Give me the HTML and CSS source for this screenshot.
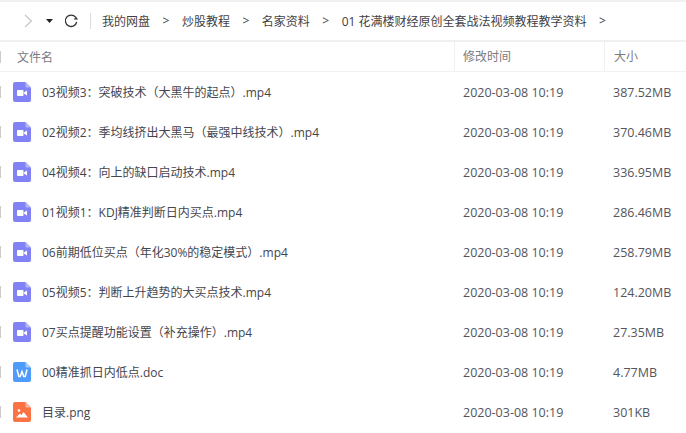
FILE: index.html
```html
<!DOCTYPE html>
<html lang="zh">
<head>
<meta charset="utf-8">
<title>我的网盘</title>
<link rel="stylesheet" href="styles.css">
</head>
<body>
<svg class="defs" width="0" height="0">
  <symbol id="video" viewBox="0 0 18 20">
    <path d="M2 0h10.500L18 5.500V18a2 2 0 0 1-2 2H2a2 2 0 0 1-2-2V2a2 2 0 0 1 2-2z" fill="#8082f5"/>
    <path d="M12.500 0L18 5.500h-4a1.500 1.500 0 0 1-1.500-1.500z" fill="#b5b6fa"/>
    <rect x="4" y="8" width="6.500" height="6" rx="1" fill="#fff"/>
    <path d="M11 10.500l3-2v5l-3-2z" fill="#fff"/>
  </symbol>
  <symbol id="word" viewBox="0 0 18 20">
    <path d="M2 0h10.500L18 5.500V18a2 2 0 0 1-2 2H2a2 2 0 0 1-2-2V2a2 2 0 0 1 2-2z" fill="#4f9bfb"/>
    <path d="M12.500 0L18 5.500h-4a1.500 1.500 0 0 1-1.500-1.500z" fill="#a3ccfd"/>
    <path d="M4 7.500l1.800 7h1.400L9 9.500l1.800 5h1.400l1.800-7" fill="none" stroke="#fff" stroke-width="1.500"/>
  </symbol>
  <symbol id="image" viewBox="0 0 18 20">
    <path d="M2 0h10.500L18 5.500V18a2 2 0 0 1-2 2H2a2 2 0 0 1-2-2V2a2 2 0 0 1 2-2z" fill="#fb7344"/>
    <path d="M12.500 0L18 5.500h-4a1.500 1.500 0 0 1-1.500-1.500z" fill="#fdb59c"/>
    <circle cx="6" cy="8.500" r="1.300" fill="#fff"/>
    <path d="M3 15.500l4-4 1.500 1.500 2-3 4.500 5.500z" fill="#fff"/>
  </symbol>
</svg>
<div class="window">
  <div class="toolbar">
    <svg class="nav-forward" width="9" height="14" viewBox="0 0 9 14"><path d="M1 1l6.500 6L1 13" fill="none" stroke="#c4c4c4" stroke-width="1.100"/></svg>
    <svg class="nav-drop" width="7" height="4" viewBox="0 0 7 4"><path d="M0 0h7L3.500 4z" fill="#222"/></svg>
    <svg class="nav-refresh" width="14" height="14" viewBox="0 0 14 14"><path d="M11.600 3.200A5.700 5.700 0 1 0 12.700 8" fill="none" stroke="#333" stroke-width="1.300"/><path d="M9.800 5.400h4.200l-2-2.800z" fill="#333"/></svg>
    <span class="nav-sep"></span>
    <nav class="crumbs">
      <span>我的网盘</span><span class="gt">&gt;</span>
      <span>炒股教程</span><span class="gt">&gt;</span>
      <span>名家资料</span><span class="gt">&gt;</span>
      <span>01 花满楼财经原创全套战法视频教程教学资料</span><span class="gt">&gt;</span>
    </nav>
  </div>
  <div class="row head">
    <span class="name">文件名</span>
    <span class="time">修改时间</span>
    <span class="size">大小</span>
  </div>
  <div class="row"><svg class="ico"><use href="#video"/></svg><span class="name">03视频3：突破技术（大黑牛的起点）.mp4</span><span class="time">2020-03-08 10:19</span><span class="size">387.52MB</span></div>
  <div class="row"><svg class="ico"><use href="#video"/></svg><span class="name">02视频2：季均线挤出大黑马（最强中线技术）.mp4</span><span class="time">2020-03-08 10:19</span><span class="size">370.46MB</span></div>
  <div class="row"><svg class="ico"><use href="#video"/></svg><span class="name">04视频4：向上的缺口启动技术.mp4</span><span class="time">2020-03-08 10:19</span><span class="size">336.95MB</span></div>
  <div class="row"><svg class="ico"><use href="#video"/></svg><span class="name">01视频1：KDJ精准判断日内买点.mp4</span><span class="time">2020-03-08 10:19</span><span class="size">286.46MB</span></div>
  <div class="row"><svg class="ico"><use href="#video"/></svg><span class="name">06前期低位买点（年化30%的稳定模式）.mp4</span><span class="time">2020-03-08 10:19</span><span class="size">258.79MB</span></div>
  <div class="row"><svg class="ico"><use href="#video"/></svg><span class="name">05视频5：判断上升趋势的大买点技术.mp4</span><span class="time">2020-03-08 10:19</span><span class="size">124.20MB</span></div>
  <div class="row"><svg class="ico"><use href="#video"/></svg><span class="name">07买点提醒功能设置（补充操作）.mp4</span><span class="time">2020-03-08 10:19</span><span class="size">27.35MB</span></div>
  <div class="row"><svg class="ico"><use href="#word"/></svg><span class="name">00精准抓日内低点.doc</span><span class="time">2020-03-08 10:19</span><span class="size">4.77MB</span></div>
  <div class="row"><svg class="ico"><use href="#image"/></svg><span class="name">目录.png</span><span class="time">2020-03-08 10:19</span><span class="size">301KB</span></div>
</div>
</body>
</html>
```

FILE: styles.css
```css
* { box-sizing: border-box; }
html, body { margin: 0; padding: 0; background: #fff; overflow: hidden; }
body { width: 686px; height: 433px; font-family: "Open Sans", "Noto Sans CJK SC", sans-serif; font-size: 12px; color: #45454d; }
.defs { position: absolute; }
.window { border-top: 2px solid #f0f0f0; }
.toolbar { height: 40px; display: flex; align-items: center; border-bottom: 2px solid #f0f0f0; padding-left: 24px; }
.nav-drop { margin-left: 13px; }
.nav-refresh { margin-left: 11px; }
.nav-sep { width: 1px; height: 16px; background: #dcdcdc; margin: 0 11px 0 12px; }
.crumbs { display: flex; color: #3f3f46; white-space: nowrap; }
.gt { margin: 0 12.500px; }
.row { height: 40px; display: flex; align-items: center; position: relative; }
.row::before { content: ""; position: absolute; left: 0; top: 14px; width: 1px; height: 12px; background: #ccc; }
.head { height: 30px; border-bottom: 1px solid #f2f2f2; color: #7a7a80; }
.head::before { top: 9px; }
.head .name { margin-left: 17px; }
.ico { width: 18px; height: 20px; margin-left: 13px; flex: none; }
.name { margin-left: 11px; width: 0; flex: 1; white-space: nowrap; }
.time { width: 150px; padding-left: 9px; color: #55555c; font-size: 12.500px; }
.size { width: 82px; padding-left: 9px; color: #55555c; font-size: 12.500px; }
.head .time, .head .size { height: 29px; line-height: 29px; color: #7a7a80; font-size: 12px; border-left: 1px solid #f0f0f0; }
.head .time { padding-left: 8px; }
```
